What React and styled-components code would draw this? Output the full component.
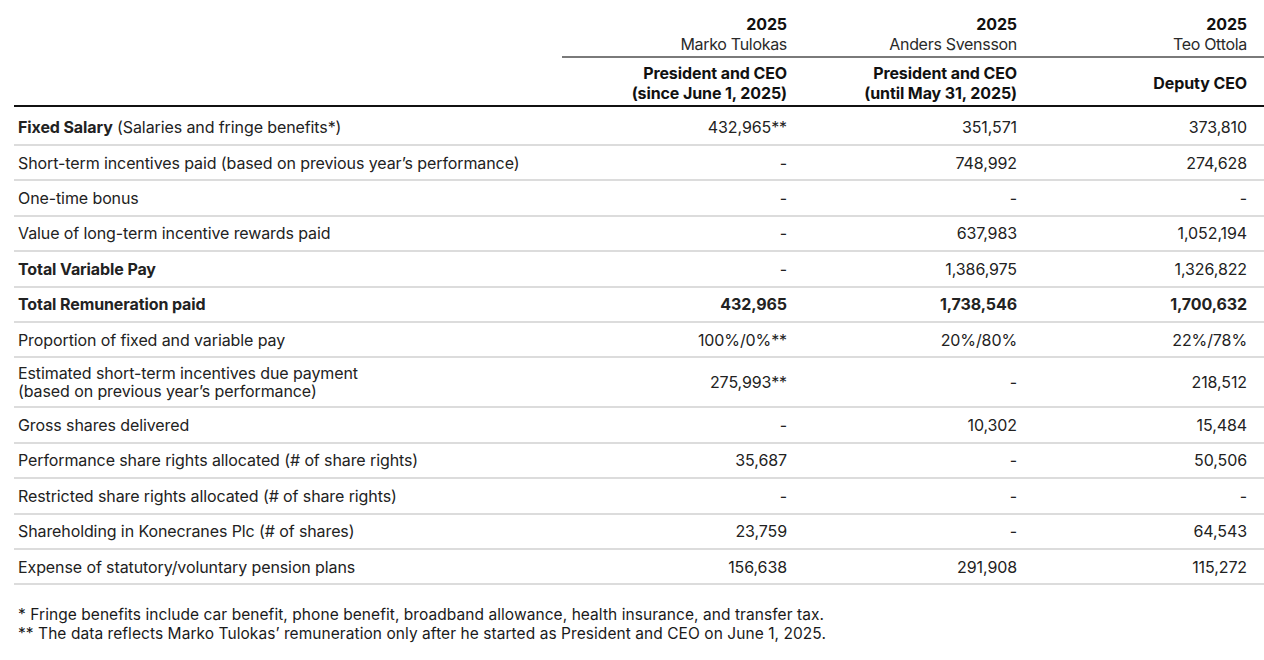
import React from "react";
import styled, { createGlobalStyle } from "styled-components";

const Global = createGlobalStyle`
  html, body { margin: 0; padding: 0; background: #fff; }
  body { font-family: "Inter", "Noto Sans", sans-serif; color: #1f1f1f; }
`;

const Page = styled.div`
  padding: 0 0 0 14px;
  width: 1250px;
`;

const cols = "548px 230px 230px 242px";

const HeadRow = styled.div`
  display: grid;
  grid-template-columns: ${cols};
  border-bottom: ${(p) => p.$border};
`;

const HeadCell = styled.div`
  grid-column: ${(p) => p.$col};
  text-align: right;
  padding: ${(p) => p.$pad};
  padding-right: ${(p) => (p.$last ? "17px" : "5px")};
  font-size: 16px;
  line-height: 20px;
  letter-spacing: -0.3px;
  display: flex;
  flex-direction: column;
  justify-content: center;
  align-items: flex-end;
`;

const NameLine = styled.div`
  grid-column: 2 / 5;
  height: 2px;
  background: #7a7a7a;
`;

const Bold = styled.span`
  font-weight: 700;
  color: #111;
  letter-spacing: -0.1px;
`;

const Light = styled.span`
  font-weight: 400;
  color: #2a2a2a;
`;

const Row = styled.div`
  display: grid;
  grid-template-columns: ${cols};
  min-height: ${(p) => (p.$tall ? "48px" : p.$first ? "34px" : "33.4px")};
  padding-top: ${(p) => (p.$first ? "3px" : "0")};
  border-bottom: 2px solid #dcdcdc;
  align-items: center;
  font-size: 16px;
  letter-spacing: -0.1px;
  color: #222;
  font-weight: ${(p) => (p.$bold ? 700 : 400)};
`;

const Label = styled.div`
  padding-left: 4px;
  line-height: 18px;
`;

const Num = styled.div`
  text-align: right;
  padding-right: ${(p) => (p.$last ? "17px" : "5px")};
`;

const Notes = styled.div`
  margin-top: 20px;
  padding-left: 4px;
  font-size: 15.5px;
  line-height: 19px;
  letter-spacing: 0.06px;
  color: #1a1a1a;
`;

const rows = [
  { label: <><b>Fixed Salary</b> (Salaries and fringe benefits*)</>, v: ["432,965**", "351,571", "373,810"], first: true },
  { label: "Short-term incentives paid (based on previous year’s performance)", v: ["-", "748,992", "274,628"] },
  { label: "One-time bonus", v: ["-", "-", "-"] },
  { label: "Value of long-term incentive rewards paid", v: ["-", "637,983", "1,052,194"] },
  { label: <b>Total Variable Pay</b>, v: ["-", "1,386,975", "1,326,822"] },
  { label: "Total Remuneration paid", v: ["432,965", "1,738,546", "1,700,632"], bold: true },
  { label: "Proportion of fixed and variable pay", v: ["100%/0%**", "20%/80%", "22%/78%"] },
  { label: <>Estimated short-term incentives due payment<br />(based on previous year’s performance)</>, v: ["275,993**", "-", "218,512"], tall: true },
  { label: "Gross shares delivered", v: ["-", "10,302", "15,484"] },
  { label: "Performance share rights allocated (# of share rights)", v: ["35,687", "-", "50,506"] },
  { label: "Restricted share rights allocated (# of share rights)", v: ["-", "-", "-"] },
  { label: "Shareholding in Konecranes Plc (# of shares)", v: ["23,759", "-", "64,543"] },
  { label: "Expense of statutory/voluntary pension plans", v: ["156,638", "291,908", "115,272"] },
];

export default function App() {
  return (
    <Page>
      <Global />
      <HeadRow>
        <HeadCell $col={2} $pad="14px 0 2px">
          <Bold>2025</Bold>
          <Light>Marko Tulokas</Light>
        </HeadCell>
        <HeadCell $col={3} $pad="14px 0 2px">
          <Bold>2025</Bold>
          <Light>Anders Svensson</Light>
        </HeadCell>
        <HeadCell $col={4} $pad="14px 0 2px" $last>
          <Bold>2025</Bold>
          <Light>Teo Ottola</Light>
        </HeadCell>
        <NameLine />
      </HeadRow>
      <HeadRow $border="2px solid #111">
        <HeadCell $col={2} $pad="5px 0 2px">
          <Bold>President and CEO</Bold>
          <Bold>(since June 1, 2025)</Bold>
        </HeadCell>
        <HeadCell $col={3} $pad="5px 0 2px">
          <Bold>President and CEO</Bold>
          <Bold>(until May 31, 2025)</Bold>
        </HeadCell>
        <HeadCell $col={4} $pad="5px 0 2px" $last>
          <Bold>Deputy CEO</Bold>
        </HeadCell>
      </HeadRow>
      {rows.map((r, i) => (
        <Row key={i} $tall={r.tall} $bold={r.bold} $first={r.first}>
          <Label>{r.label}</Label>
          <Num>{r.v[0]}</Num>
          <Num>{r.v[1]}</Num>
          <Num $last>{r.v[2]}</Num>
        </Row>
      ))}
      <Notes>
        <div>* Fringe benefits include car benefit, phone benefit, broadband allowance, health insurance, and transfer tax.</div>
        <div>** The data reflects Marko Tulokas’ remuneration only after he started as President and CEO on June 1, 2025.</div>
      </Notes>
    </Page>
  );
}
